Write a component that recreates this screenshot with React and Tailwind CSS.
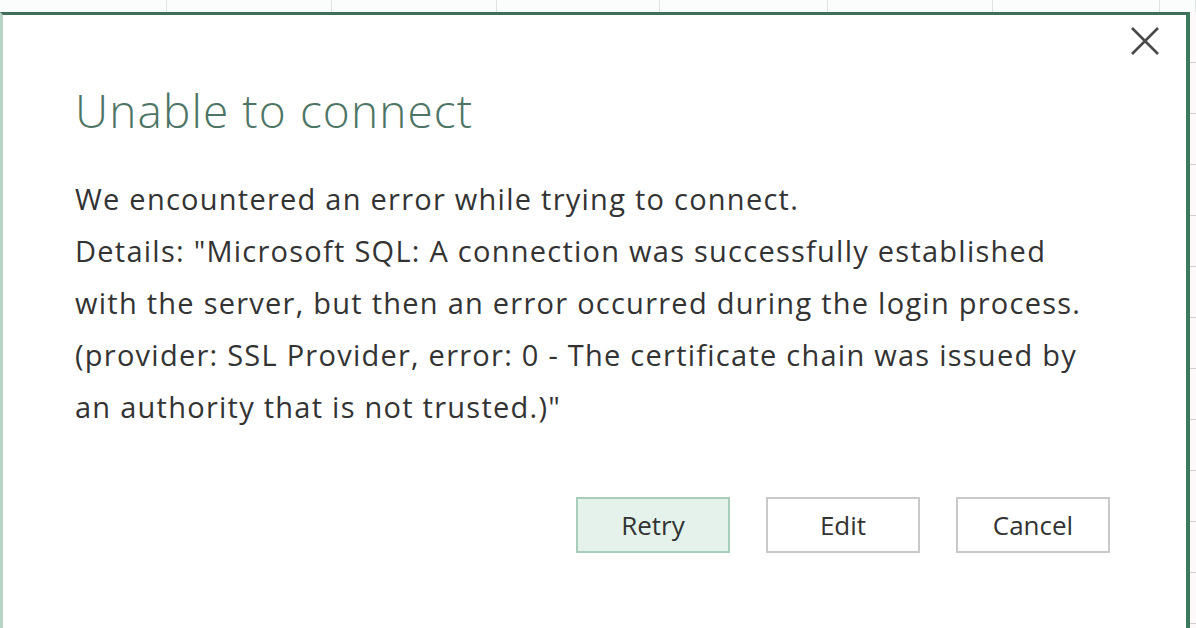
import React from "react";

const font = { fontFamily: '"Open Sans", "Noto Sans", sans-serif' };

function CloseIcon() {
  return (
    <svg width="30" height="30" viewBox="0 0 30 30" className="text-[#4a4a4a]">
      <path d="M2 2 L28 28 M28 2 L2 28" stroke="currentColor" strokeWidth="2.6" fill="none" />
    </svg>
  );
}

function DialogButton({ children, primary }) {
  return (
    <button
      className={
        primary
          ? "w-[154px] h-[56px] border-2 border-[#a9cdbb] bg-[#e4f2eb] text-[26px] text-[#333]"
          : "w-[154px] h-[56px] border-2 border-[#c9c9c9] bg-white text-[26px] text-[#333]"
      }
    >
      {children}
    </button>
  );
}

export default function App() {
  const cols = [167, 165, 165, 163, 168, 165, 167, 36];

  return (
    <div className="w-[1196px] h-[628px] overflow-hidden bg-white flex flex-col" style={font}>
      {/* spreadsheet behind */}
      <div className="h-[12px] flex bg-[#fbfdfc]">
        {cols.map((w, i) => (
          <div key={i} className="h-full border-r border-[#dfe3e1]" style={{ width: w }} />
        ))}
      </div>

      <div className="flex-1 flex">
        {/* dialog */}
        <div className="flex-1 bg-white border-t-[3px] border-[#3f6f58] border-l-[3px] border-l-[#b7d3c5] border-r-[4px] border-r-[#3b7a5a] flex flex-col">
          <div className="flex justify-end pt-[11px] pr-[26px]">
            <CloseIcon />
          </div>

          <div className="pl-[72px] pr-[30px]">
            <h1 className="text-[46px] font-light tracking-[1.1px] text-[#4d7566] leading-[52px] mt-[28px]">
              Unable to connect
            </h1>

            <div className="mt-[37px] text-[29px] tracking-[1.25px] leading-[52px] text-[#333]">
              <p>We encountered an error while trying to connect.</p>
              <p>
                Details: "Microsoft SQL: A connection was successfully established
                <br />
                with the server, but then an error occurred during the login process.
                <br />
                (provider: SSL Provider, error: 0 - The certificate chain was issued by
                <br />
                an authority that is not trusted.)"
              </p>
            </div>
          </div>

          <div className="flex justify-end gap-[36px] pr-[76px] mt-[64px]">
            <DialogButton primary>Retry</DialogButton>
            <DialogButton>Edit</DialogButton>
            <DialogButton>Cancel</DialogButton>
          </div>
        </div>

        {/* grid at the right edge */}
        <div className="w-[6px] flex flex-col bg-[#fdf8f9]">
          {Array.from({ length: 12 }).map((_, i) => (
            <div key={i} className="h-[51px] shrink-0 border-b border-[#cfcfcf]" />
          ))}
        </div>
      </div>
    </div>
  );
}
